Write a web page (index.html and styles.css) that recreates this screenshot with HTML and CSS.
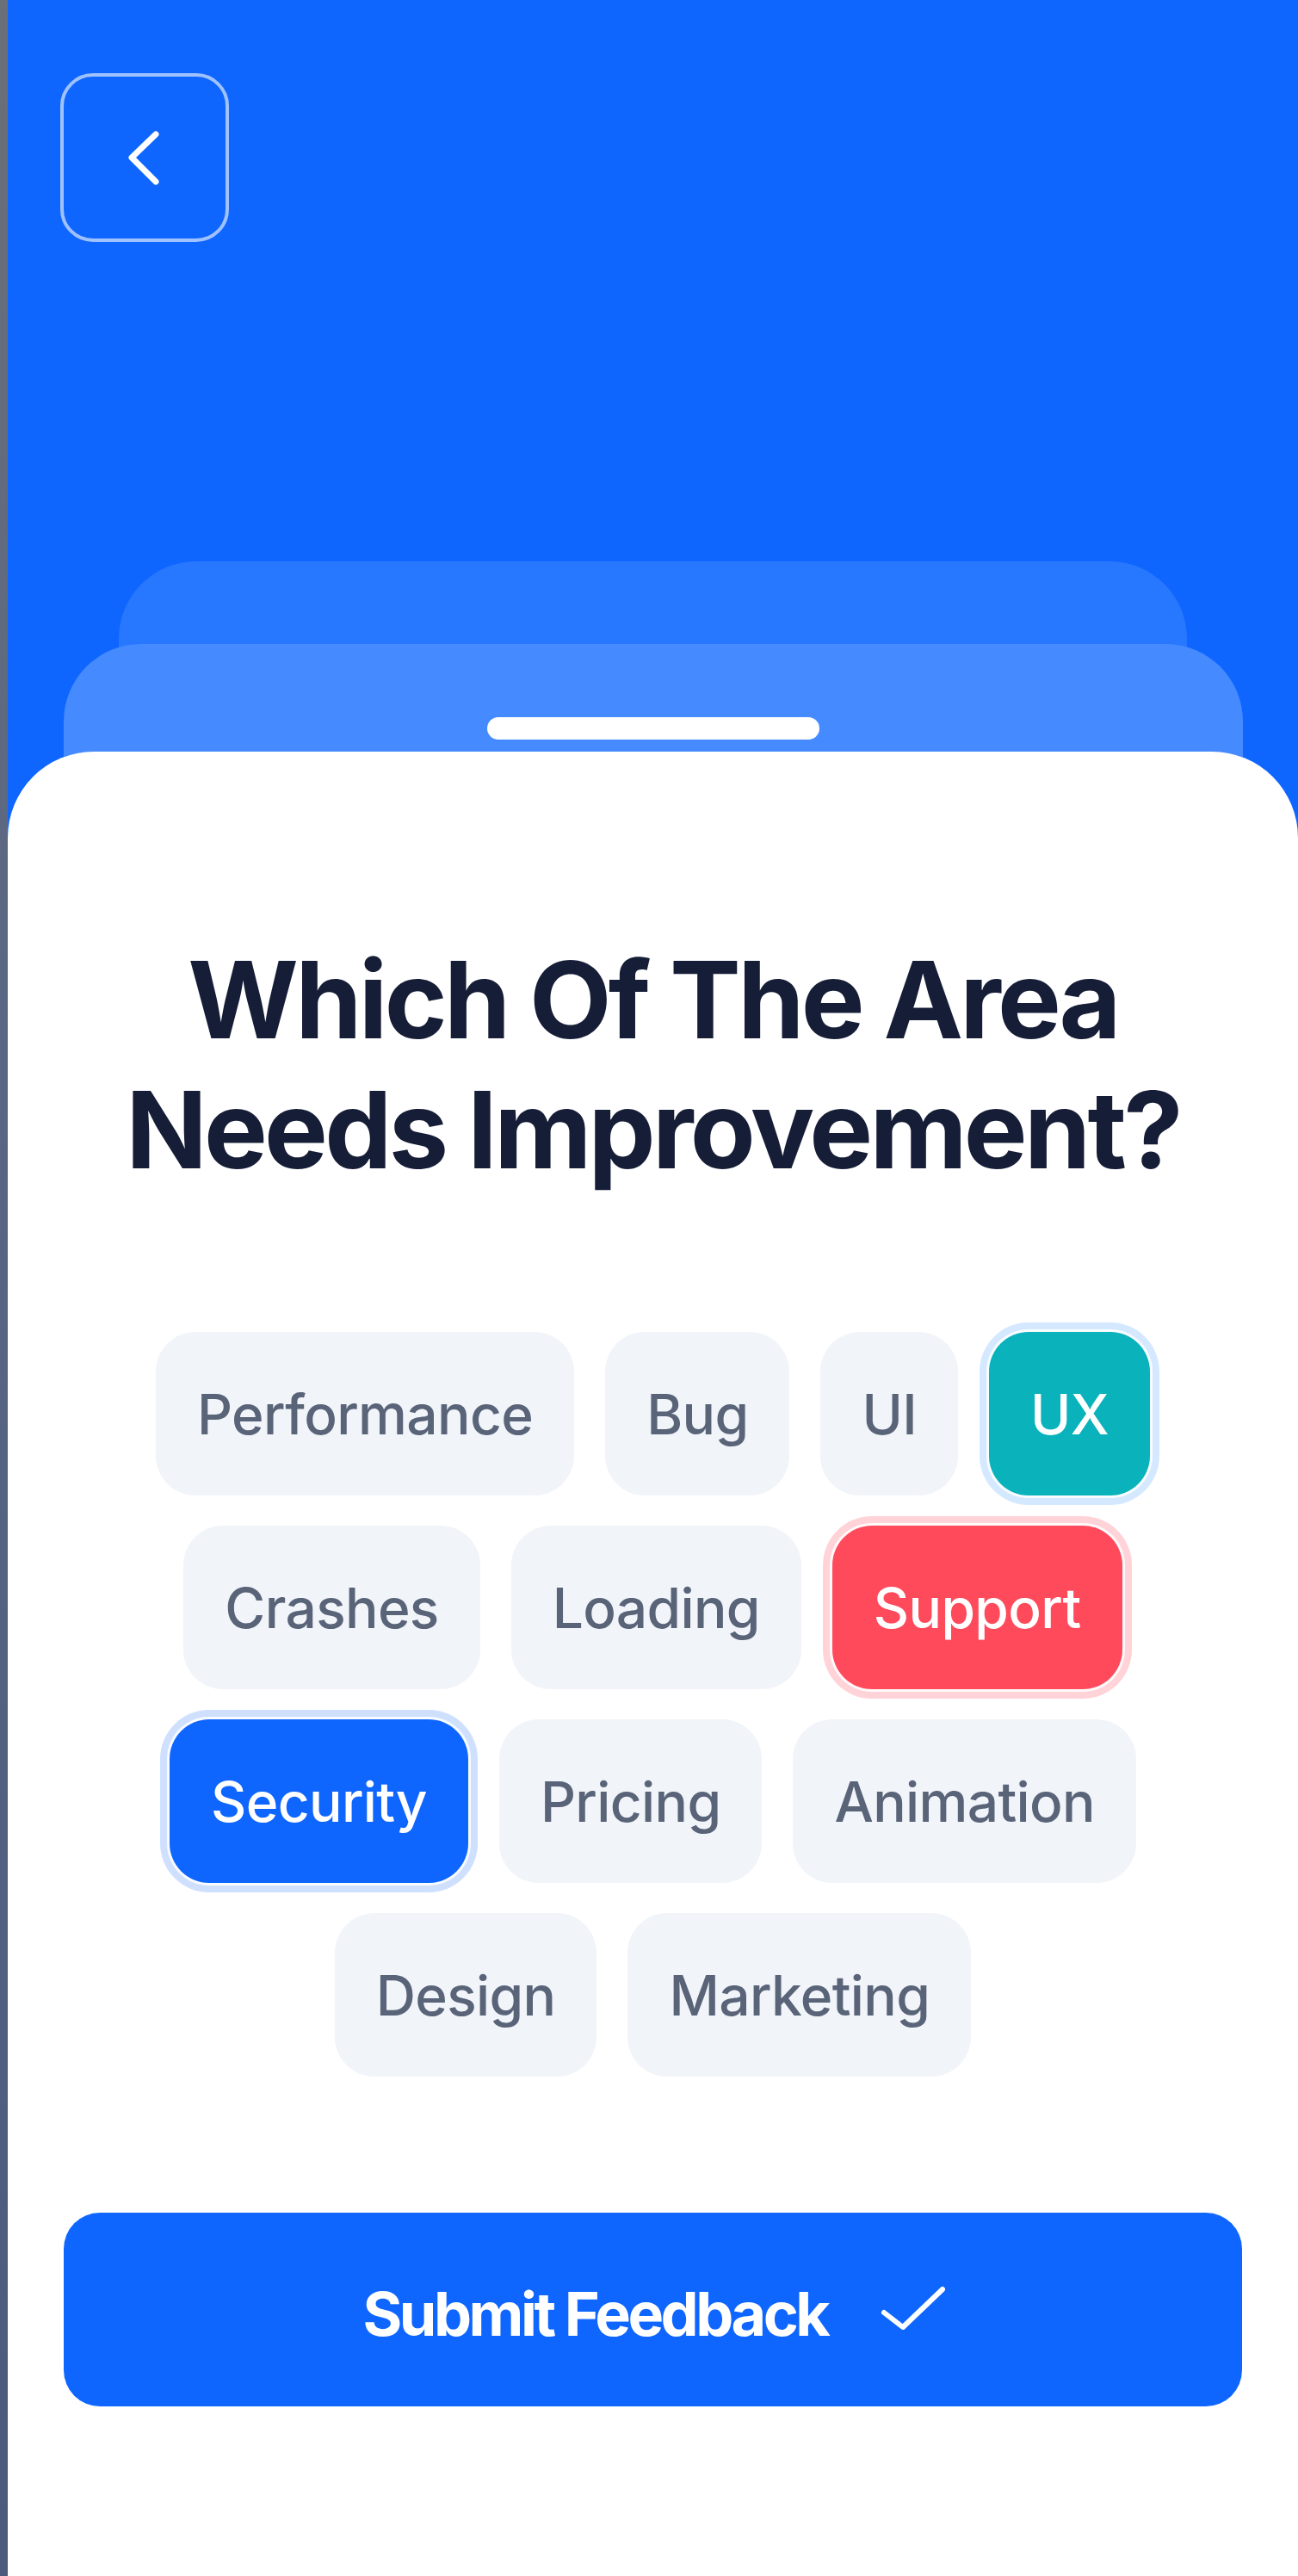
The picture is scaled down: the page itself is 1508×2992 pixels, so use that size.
FILE: index.html
```html
<!DOCTYPE html>
<html lang="en">
<head>
<meta charset="utf-8">
<title>Feedback</title>
<link rel="stylesheet" href="styles.css">
</head>
<body>
<div class="frame">
  <div class="edge"></div>
  <div class="app">
    <header class="header">
      <button class="back" aria-label="Back">
        <svg width="196" height="196" viewBox="0 0 196 196" fill="none">
          <polyline points="111,71 83,98 111,126" stroke="#fff" stroke-width="7" stroke-linecap="round" stroke-linejoin="round"/>
        </svg>
      </button>
    </header>
    <div class="stack">
      <div class="layer layer-back"></div>
      <div class="layer layer-mid"><span class="handle"></span></div>
      <main class="sheet">
        <h1 class="title">Which Of The Area<br>Needs Improvement?</h1>
        <div class="chips">
          <div class="row">
            <span class="chip">Performance</span>
            <span class="chip">Bug</span>
            <span class="chip">UI</span>
            <span class="chip chip-teal">UX</span>
          </div>
          <div class="row">
            <span class="chip">Crashes</span>
            <span class="chip">Loading</span>
            <span class="chip chip-red">Support</span>
          </div>
          <div class="row">
            <span class="chip chip-blue">Security</span>
            <span class="chip">Pricing</span>
            <span class="chip">Animation</span>
          </div>
          <div class="row">
            <span class="chip">Design</span>
            <span class="chip">Marketing</span>
          </div>
        </div>
        <button class="submit">
          <span>Submit Feedback</span>
          <svg width="76" height="56" viewBox="0 0 76 56" fill="none">
            <polyline points="4,31 26,48 72,4" stroke="#fff" stroke-width="6" stroke-linecap="round" stroke-linejoin="round"/>
          </svg>
        </button>
      </main>
    </div>
  </div>
</div>
</body>
</html>
```
FILE: styles.css
```css
* { box-sizing: border-box; }

html, body {
  margin: 0;
  padding: 0;
  width: 1508px;
  height: 2992px;
  overflow: hidden;
  background: #ffffff;
}

.frame {
  display: flex;
  width: 1508px;
  height: 2992px;
}

.edge {
  width: 9px;
  flex: none;
  background: linear-gradient(180deg, #6b6f78 0%, #596784 40%, #4b5a7d 100%);
}

.app {
  flex: 1;
  display: flex;
  flex-direction: column;
  background: #0f66ff;
  font-family: "Inter", "Liberation Sans", sans-serif;
}

.header {
  height: 652px;
  padding: 85px 0 0 61px;
  flex: none;
}

.back {
  width: 196px;
  height: 196px;
  padding: 0;
  border: 4px solid rgba(255, 255, 255, 0.6);
  border-radius: 38px;
  background: transparent;
  display: flex;
  align-items: center;
  justify-content: center;
}

.back svg { display: block; margin: -4px; }

.stack {
  flex: 1;
  display: flex;
  flex-direction: column;
}

.layer {
  position: relative;
  margin: 0 auto;
  border-radius: 90px 90px 0 0;
}

.layer-back {
  width: 1241px;
  height: 200px;
  background: #2878ff;
  margin-bottom: -104px;
  z-index: 1;
}

.layer-mid {
  width: 1370px;
  height: 200px;
  background: #468aff;
  margin-bottom: -75px;
  z-index: 2;
  display: flex;
  justify-content: center;
  padding-top: 85px;
}

.handle {
  display: block;
  width: 386px;
  height: 26px;
  border-radius: 13px;
  background: #ffffff;
}

.sheet {
  position: relative;
  z-index: 3;
  flex: 1;
  background: #ffffff;
  border-radius: 100px 100px 0 0;
  padding-top: 213px;
  display: flex;
  flex-direction: column;
  align-items: center;
}

.title {
  margin: 0;
  font-family: "Inter", "Liberation Sans", sans-serif;
  font-weight: 700;
  font-size: 124px;
  line-height: 151px;
  letter-spacing: -0.03em;
  color: #161d36;
  text-align: center;
}

.chips {
  margin-top: 159px;
  display: flex;
  flex-direction: column;
  gap: 35px;
}

.row {
  display: flex;
  justify-content: center;
  gap: 36px;
}

.chip {
  height: 190px;
  padding: 0 48px;
  display: flex;
  align-items: center;
  border-radius: 46px;
  background: #f1f4f9;
  color: #5a6479;
  font-size: 64px;
  font-weight: 500;
  letter-spacing: -0.01em;
  white-space: nowrap;
}

.chip-teal {
  background: #0ab2bc;
  color: #ffffff;
  box-shadow: 0 0 0 3px rgba(255, 255, 255, 0.85), 0 0 0 11px #d4e9ff;
}

.chip-red {
  background: #ff4a5c;
  color: #ffffff;
  box-shadow: 0 0 0 3px rgba(255, 255, 255, 0.85), 0 0 0 11px #ffd3d8;
}

.chip-blue {
  background: #0f66ff;
  color: #ffffff;
  box-shadow: 0 0 0 3px rgba(255, 255, 255, 0.85), 0 0 0 11px #cfe0ff;
}

.submit {
  margin-top: 158px;
  width: 1369px;
  height: 225px;
  border: none;
  border-radius: 42px;
  background: #0f66ff;
  color: #ffffff;
  display: flex;
  align-items: center;
  justify-content: center;
  gap: 62px;
  font-family: "Inter", "Liberation Sans", sans-serif;
  font-weight: 700;
  font-size: 70px;
  letter-spacing: -0.05em;
  padding: 0 0 0 4px;
}

.submit span { display: block; margin-top: 10px; }
.submit svg { display: block; }
```
